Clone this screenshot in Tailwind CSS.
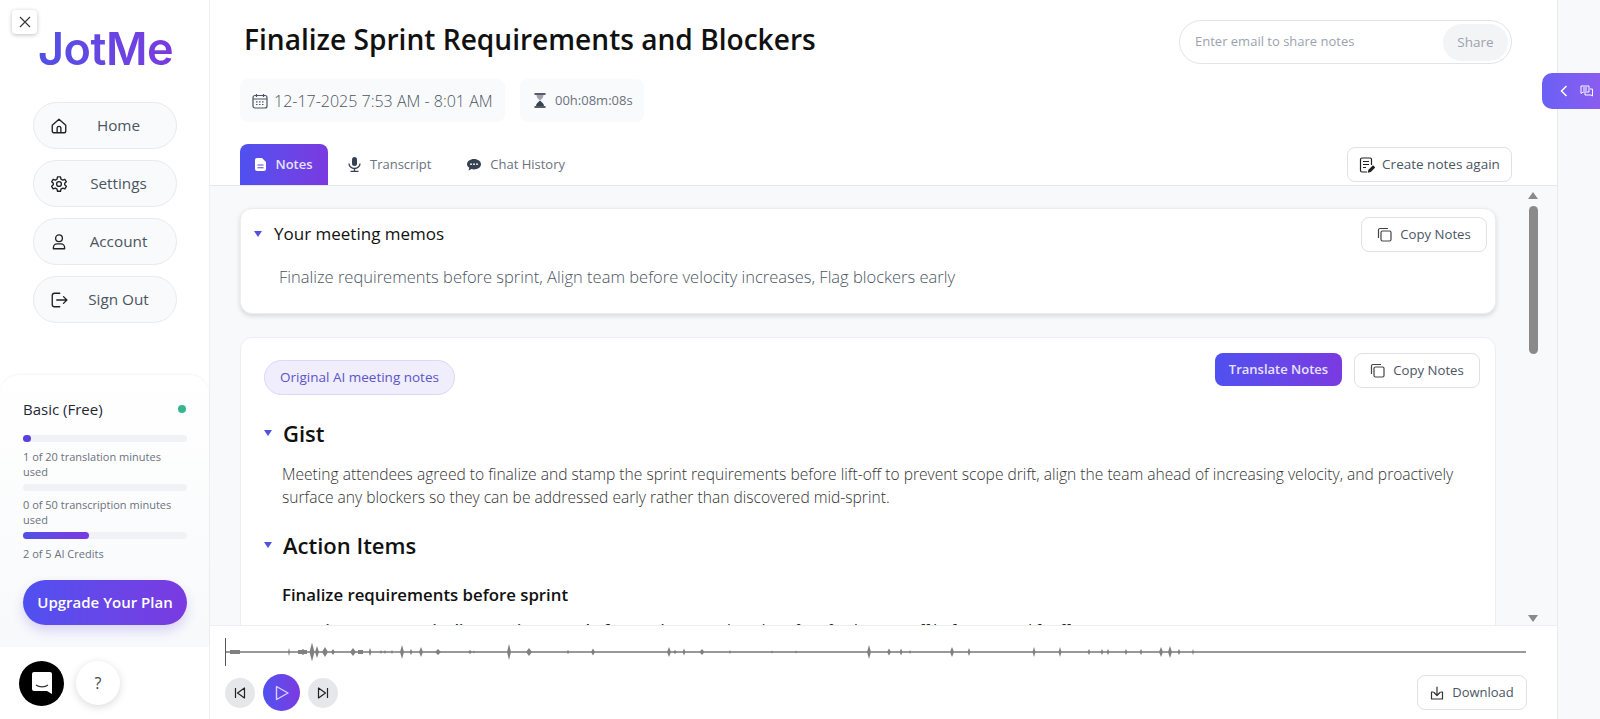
<!DOCTYPE html>
<html><head><meta charset="utf-8"><script src="https://cdn.jsdelivr.net/npm/@tailwindcss/browser@4"></script></head>
<body class="font-['Open_Sans',sans-serif]">
<div class="flex h-[719px] w-[1600px] overflow-hidden bg-white text-[#1f2937]">
<aside class="relative flex w-[210px] shrink-0 flex-col border-r border-[#eef0f3] bg-white">
 <button class="absolute left-3 top-[10px] flex h-[24px] w-[25px] items-center justify-center rounded bg-white shadow-[0_1px_4px_rgba(0,0,0,.25)]"><svg width="14" height="14" viewBox="0 0 14 14" fill="none" stroke="#333" stroke-width="1.1"><path d="M2 2l10 10M2 12L12 2"/></svg></button>
 <div class="mt-[24px] ml-[38px] w-[136px] bg-gradient-to-r from-[#4f50e6] to-[#7a3ae0] bg-clip-text font-['Inter',sans-serif] text-[45px] font-semibold leading-[50px] tracking-[-0.5px] text-transparent">JotMe</div>
 <nav class="ml-[33px] mt-[28px] flex w-[144px] flex-col gap-[11px]">
  <a class="flex h-[47px] items-center rounded-full border border-[#e8eaee] bg-[#f9fafb] pl-[16px] text-[15.300px] text-[#4b5563]"><svg class="shrink-0" width="18" height="18" viewBox="0 0 24 24" fill="none" stroke="#222" stroke-width="1.8" stroke-linejoin="round"><path d="M3 11l9-8 9 8v8a2 2 0 0 1-2 2H5a2 2 0 0 1-2-2z"/><path d="M9.5 21v-6a2.5 2.5 0 0 1 5 0v6"/></svg><span class="flex-1 pr-[7px] text-center">Home</span></a>
  <a class="flex h-[47px] items-center rounded-full border border-[#e8eaee] bg-[#f9fafb] pl-[16px] text-[15.300px] text-[#4b5563]"><svg class="shrink-0" width="18" height="18" viewBox="0 0 24 24" fill="none" stroke="#222" stroke-width="1.8" stroke-linejoin="round"><path d="M10 2.5h4l.6 3 2.4 1.2 2.8-1 2 3.4-2.2 2v2l2.2 2-2 3.4-2.8-1-2.4 1.2-.6 3h-4l-.6-3-2.4-1.2-2.8 1-2-3.4 2.2-2v-2l-2.2-2 2-3.4 2.8 1 2.4-1.2z"/><circle cx="12" cy="12" r="3.2"/></svg><span class="flex-1 pr-[7px] text-center">Settings</span></a>
  <a class="flex h-[47px] items-center rounded-full border border-[#e8eaee] bg-[#f9fafb] pl-[16px] text-[15.300px] text-[#4b5563]"><svg class="shrink-0" width="18" height="18" viewBox="0 0 24 24" fill="none" stroke="#222" stroke-width="1.8"><circle cx="12" cy="7" r="4.5"/><path d="M4.5 21v-1.5a5 5 0 0 1 5-5h5a5 5 0 0 1 5 5V21z" stroke-linejoin="round"/></svg><span class="flex-1 pr-[7px] text-center">Account</span></a>
  <a class="flex h-[47px] items-center rounded-full border border-[#e8eaee] bg-[#f9fafb] pl-[16px] text-[15.300px] text-[#4b5563]"><svg class="shrink-0" width="18" height="18" viewBox="0 0 24 24" fill="none" stroke="#222" stroke-width="1.8" stroke-linecap="round" stroke-linejoin="round"><path d="M13 3H6a3 3 0 0 0-3 3v12a3 3 0 0 0 3 3h7"/><path d="M9 12h13M18 7.5l4.5 4.5-4.5 4.5"/></svg><span class="flex-1 pr-[7px] text-center">Sign Out</span></a>
 </nav>
 <div class="mt-[52px] h-[272px] rounded-t-[20px] bg-gradient-to-b from-white to-[#f8f9fb] px-[23px] pt-[24px] shadow-[0_-1px_2px_rgba(0,0,0,.05)]">
  <div class="flex items-center justify-between text-[15px] leading-[20px] text-[#1f2937]"><span>Basic (Free)</span><span class="h-[8px] w-[8px] rounded-full bg-[#34b78f]"></span></div>
  <div class="mt-[16px] h-[7px] w-[164px] rounded-full bg-[#f1f2f5]"><div class="h-[7px] w-[8px] rounded-full bg-[#5b41dc]"></div></div>
  <p class="mt-[7px] text-[11px] leading-[15px] text-[#6b7280]">1 of 20 translation minutes used</p>
  <div class="mt-[5px] h-[7px] w-[164px] rounded-full bg-[#f1f2f5]"></div>
  <p class="mt-[6px] text-[11px] leading-[15px] text-[#6b7280]">0 of 50 transcription minutes used</p>
  <div class="mt-[5px] h-[7px] w-[164px] rounded-full bg-[#f1f2f5]"><div class="h-[7px] w-[66px] rounded-full bg-gradient-to-r from-[#4f50e6] to-[#7a3ae0]"></div></div>
  <p class="mt-[7px] text-[11px] leading-[15px] text-[#6b7280]">2 of 5 AI Credits</p>
  <button class="mt-[19px] flex h-[45px] w-[164px] items-center justify-center rounded-full bg-gradient-to-r from-[#4f50f0] to-[#7a3ae0] text-[15px] font-semibold text-white shadow-[0_6px_12px_rgba(90,60,220,.2)]">Upgrade Your Plan</button>
 </div>
 <div class="flex flex-1 items-center gap-[12px] pl-[19px]">
  <div class="flex h-[45px] w-[45px] items-center justify-center rounded-full bg-black"><svg width="22" height="24" viewBox="0 0 22 24"><path d="M3 1h16a2 2 0 0 1 2 2v20l-5-3H3a2 2 0 0 1-2-2V3a2 2 0 0 1 2-2z" fill="#fff"/><path d="M5 14c3 2.400 9 2.400 12 0" fill="none" stroke="#333" stroke-width="1.2"/></svg></div>
  <div class="flex h-[44px] w-[44px] items-center justify-center rounded-full bg-white text-[16px] text-[#444] shadow-[0_2px_8px_rgba(0,0,0,.15)]">?</div>
 </div>
</aside>
<main class="relative flex w-[1347px] shrink-0 flex-col">
 <header class="h-[185px] shrink-0 px-[30px]">
  <div class="flex items-start justify-between">
   <h1 class="ml-[4px] mt-[20px] text-[28.100px] font-semibold leading-[38px] text-[#111]">Finalize Sprint Requirements and Blockers</h1>
   <div class="mt-[20px] mr-[15px] flex h-[44px] w-[333px] items-center justify-between rounded-full border border-[#e2e4e8] pl-[15px] pr-[3px]"><span class="text-[13px] text-[#9ca3af]">Enter email to share notes</span><span class="flex h-[37px] w-[65px] items-center justify-center rounded-full bg-[#f3f4f6] text-[13.500px] text-[#9ca3af]">Share</span></div>
  </div>
  <div class="mt-[15px] flex gap-[15px]">
   <div class="flex h-[43px] w-[265px] items-center gap-[6px] rounded-lg bg-[#f9fafb] pl-[12px] text-[16px] font-light whitespace-nowrap text-[#4b5563]"><svg width="16" height="16" viewBox="0 0 16 16" fill="none" stroke="#4b5563" stroke-width="1.2"><rect x="1" y="2.500" width="14" height="12.500" rx="2"/><path d="M1 6h14M4.500 1v3M11.500 1v3"/><path d="M4 8.800h8M4 11.500h8" stroke-dasharray="1.500 1.500"/></svg><span>12-17-2025 7:53 AM - 8:01 AM</span></div>
   <div class="flex h-[43px] w-[124px] items-center gap-[9px] rounded-lg bg-[#f9fafb] pl-[14px] text-[13px] text-[#6b7280]"><svg width="12" height="15" viewBox="0 0 12 15"><path d="M2.500 2c0 2.500 1.800 4 3.500 5.500C7.700 6 9.500 4.500 9.500 2z" fill="#9ca3af"/><path d="M2 13c0-2.500 2.300-4 4-5.500 1.700 1.500 4 3 4 5.500z" fill="#374151"/><path d="M.5 1h11M.5 14h11" stroke="#1f2937" stroke-width="1.600"/></svg><span>00h:08m:08s</span></div>
  </div>
  <div class="mt-[22px] flex items-end justify-between">
   <div class="flex items-center text-[13px] text-[#6b7280]">
    <div class="flex h-[41px] w-[88px] items-center justify-center gap-[9px] rounded-t-lg bg-gradient-to-r from-[#4f50f0] to-[#7a3ae0] font-semibold text-[#e7e3ff]"><svg width="11" height="13" viewBox="0 0 11 13"><path d="M2 0h5l4 4v7a2 2 0 0 1-2 2H2a2 2 0 0 1-2-2V2a2 2 0 0 1 2-2z" fill="#fff"/><path d="M2.500 7h6M2.500 9.800h6" stroke="#5b45e6" stroke-width="1.100"/></svg>Notes</div>
    <div class="ml-[20px] flex items-center gap-[9px]"><svg width="13" height="15" viewBox="0 0 13 15" fill="none" stroke="#374151" stroke-width="1.300"><rect x="4" y="0" width="5" height="9" rx="2.500" fill="#374151" stroke="none"/><path d="M1 6.500a5.500 5 0 0 0 11 0M6.500 11.500V14M2.500 14.300h8"/></svg>Transcript</div>
    <div class="ml-[36px] flex items-center gap-[9px]"><svg width="14" height="12" viewBox="0 0 14 12"><path d="M7 0c3.900 0 7 2.300 7 5.200s-3.100 5.200-7 5.200c-.9 0-1.700-.1-2.500-.4L1.500 11.500l.8-2.800C.9 7.800 0 6.600 0 5.200 0 2.300 3.100 0 7 0z" fill="#374151"/><circle cx="4" cy="5.200" r=".9" fill="#fff"/><circle cx="7" cy="5.200" r=".9" fill="#fff"/><circle cx="10" cy="5.200" r=".9" fill="#fff"/></svg>Chat History</div>
   </div>
   <button class="mb-[3px] mr-[15px] flex h-[35px] w-[165px] items-center justify-center gap-[7px] rounded-lg border border-[#dfe1e6] text-[13.500px] text-[#4b5563]"><svg width="16" height="16" viewBox="0 0 16 16" fill="none" stroke="#222" stroke-width="1.200"><path d="M8 15H3a1.500 1.500 0 0 1-1.500-1.500v-11A1.500 1.500 0 0 1 3 1h8a1.500 1.500 0 0 1 1.500 1.500V8M4 4.500h6M4 7.500h6M4 10.500h3"/><path d="M9.500 15l.5-2 4-4 1.500 1.500-4 4z" fill="#222"/></svg>Create notes again</button>
  </div>
 </header>
 <section class="relative h-[440px] shrink-0 overflow-hidden border-t border-[#e5e7eb] bg-[#f8f9fb] pl-[30px] pr-[60px] pt-[22px]">
  <div class="h-[106px] w-[1256px] rounded-[12px] border border-[#eceef1] bg-white pl-[13px] pr-[8px] pt-[8px] shadow-[0_2px_5px_rgba(0,0,0,.14)]">
   <div class="flex items-start justify-between">
    <div class="flex items-center gap-[12px] pt-[5px] text-[17px] font-medium leading-[24px] text-[#111]"><span class="h-0 w-0 border-x-[4.500px] border-t-[6px] border-x-transparent border-t-[#5451dc]"></span>Your meeting memos</div>
    <button class="flex h-[35px] w-[126px] items-center justify-center gap-[8px] rounded-lg border border-[#dfe1e6] text-[13.200px] text-[#4b5563]"><svg width="15" height="15" viewBox="0 0 15 15" fill="none" stroke="#444" stroke-width="1.200"><rect x="4" y="4" width="10" height="10" rx="1.500"/><path d="M11 1.500H3A1.500 1.500 0 0 0 1.500 3v8"/></svg>Copy Notes</button>
   </div>
   <p class="ml-[25px] mt-[13px] text-[16.500px] font-light leading-[24px] text-[#4b5563]">Finalize requirements before sprint, Align team before velocity increases, Flag blockers early</p>
  </div>
  <div class="mt-[23px] h-[400px] w-[1256px] rounded-[12px] border border-[#eceef1] bg-white pl-[23px] pr-[15px] pt-[15px]">
   <div class="flex items-start justify-between">
    <span class="mt-[7px] flex h-[35px] w-[191px] items-center justify-center rounded-full border border-[#dcd8f5] bg-[#f0edfc] text-[13.500px] text-[#5a55c8]">Original AI meeting notes</span>
    <div class="flex gap-[12px]">
     <button class="h-[33px] w-[127px] rounded-lg bg-gradient-to-r from-[#4f50f0] to-[#7a3ae0] text-[13px] font-semibold text-[#e7e3ff]">Translate Notes</button>
     <button class="flex h-[35px] w-[126px] items-center justify-center gap-[8px] rounded-lg border border-[#dfe1e6] text-[13.200px] text-[#4b5563]"><svg width="15" height="15" viewBox="0 0 15 15" fill="none" stroke="#444" stroke-width="1.200"><rect x="4" y="4" width="10" height="10" rx="1.500"/><path d="M11 1.500H3A1.500 1.500 0 0 0 1.500 3v8"/></svg>Copy Notes</button>
    </div>
   </div>
   <h2 class="mt-[22px] flex items-center gap-[11px] text-[22px] font-semibold leading-[32px] text-[#111]"><span class="h-0 w-0 border-x-[4.500px] border-t-[6px] border-x-transparent border-t-[#5451dc]"></span>Gist</h2>
   <p class="ml-[18px] mt-[14px] w-[1185px] text-[15.600px] font-light leading-[22.500px] text-[#333]">Meeting attendees agreed to finalize and stamp the sprint requirements before lift-off to prevent scope drift, align the team ahead of increasing velocity, and proactively<br>surface any blockers so they can be addressed early rather than discovered mid-sprint.</p>
   <h2 class="mt-[21px] flex items-center gap-[11px] text-[22px] font-semibold leading-[32px] text-[#111]"><span class="h-0 w-0 border-x-[4.500px] border-t-[6px] border-x-transparent border-t-[#5451dc]"></span>Action Items</h2>
   <h3 class="ml-[18px] mt-[22px] text-[16.800px] font-semibold leading-[24px] text-[#111]">Finalize requirements before sprint</h3>
   <p class="ml-[37px] mt-[11px] text-[15px] leading-[22px] text-[#222]"><b class="font-semibold">Assign owner to: Finalize requirements before sprint</b> — Lock and confirm final stamp-off before sprint lift-off</p>
  </div>
  <div class="absolute right-[19px] top-[6px] flex h-[430px] w-[10px] flex-col items-center justify-between">
   <span class="h-0 w-0 border-x-[5px] border-b-[7px] border-x-transparent border-b-[#8a8a8a]"></span>
   <span class="absolute top-[14px] h-[148px] w-[9px] rounded-full bg-[#8a8a8a]"></span>
   <span class="h-0 w-0 border-x-[5px] border-t-[7px] border-x-transparent border-t-[#8a8a8a]"></span>
  </div>
 </section>
 <footer class="h-[94px] shrink-0 border-t border-[#eceef1] bg-white pl-[15px] pr-[30px]">
  <svg class="mt-[12px] block" width="1302" height="28" viewBox="0 0 1302 28"><path d="M.5 0v28" stroke="#555" stroke-width="1"/><path d="M1 14H1301" stroke="#777" stroke-width="1.500"/>
   <g fill="#808080"><path d="M5 12h10v4H5zM73 12h9v4h-9zM133 12h5v4h-5z"/>
   <path d="M64 10l1 4-1 4-1-4zM78 11l4 3-4 3-4-3zM87 4.500l2.500 9.500-2.500 9.500-2.500-9.500zM92 8l2 6-2 6-2-6zM100 9l3 5-3 5-3-5zM108 11l2 3-2 3-2-3zM128 10l3 4-3 4-3-4zM145 10l1.500 4-1.500 4-1.500-4zM156 12l1 2-1 2-1-2zM160 12l1 2-1 2-1-2zM167 12l1 2-1 2-1-2zM177 7l2 7-2 7-2-7zM186 11l1.500 3-1.500 3-1.500-3zM196 9l2 5-2 5-2-5zM213 11l3 3-3 3-3-3zM245 12l2 2-2 2-2-2zM249 12.500l1 1.500-1 1.500-1-1.500zM284 6l2 8-2 8-2-8zM304 10l3 4-3 4-3-4zM343 12l1.500 2-1.500 2-1.500-2zM368 10.500l2 3.500-2 3.500-2-3.500z"/>
   <path d="M444 9l2 5-2 5-2-5zM450 12l2 2-2 2-2-2zM459 10.500l1.500 3.500-1.500 3.500-1.500-3.500zM477 11l2.500 3-2.500 3-2.500-3zM505 12l1 2-1 2-1-2zM547 12.500l1 1.500-1 1.500-1-1.500zM571 12.500l1 1.500-1 1.500-1-1.500zM644 7l2 7-2 7-2-7zM664 10.500l2 3.500-2 3.500-2-3.500zM676 10.500l1.500 3.500-1.500 3.500-1.500-3.500zM685 12l1 2-1 2-1-2zM727 9l2 5-2 5-2-5zM744 10l1.500 4-1.500 4-1.500-4zM809 9l1.500 5-1.500 5-1.500-5zM835 9l1.500 5-1.500 5-1.500-5zM864 11l1.500 3-1.500 3-1.500-3zM877 11l1.500 3-1.500 3-1.500-3zM883 11l1.500 3-1.500 3-1.500-3zM901 11l1.500 3-1.500 3-1.500-3zM916 11l1.500 3-1.500 3-1.500-3zM936 9l2 5-2 5-2-5zM945 8l2 6-2 6-2-6zM954 11l1.500 3-1.500 3-1.500-3zM968 11l1 3-1 3-1-3z"/></g></svg>
  <div class="mt-[8px] flex items-center justify-between">
   <div class="flex items-center gap-[8px]">
    <button class="flex h-[30px] w-[30px] items-center justify-center rounded-full bg-[#e5e7eb]"><svg width="12" height="12" viewBox="0 0 12 12" fill="none" stroke="#222" stroke-width="1.200" stroke-linejoin="round"><path d="M1.500 1v10M10.500 1v10L3.500 6z"/></svg></button>
    <button class="flex h-[37px] w-[37px] items-center justify-center rounded-full bg-gradient-to-r from-[#4f50f0] to-[#7a3ae0]"><svg width="14" height="16" viewBox="0 0 14 16" fill="none" stroke="#d8d0ff" stroke-width="1.400" stroke-linejoin="round"><path d="M1.500 1.500v13L13 8z"/></svg></button>
    <button class="flex h-[30px] w-[30px] items-center justify-center rounded-full bg-[#e5e7eb]"><svg width="12" height="12" viewBox="0 0 12 12" fill="none" stroke="#222" stroke-width="1.200" stroke-linejoin="round"><path d="M10.500 1v10M1.500 1v10L8.500 6z"/></svg></button>
   </div>
   <button class="flex h-[35px] w-[110px] items-center justify-center gap-[8px] rounded-lg border border-[#dfe1e6] text-[13px] text-[#4b5563]"><svg width="14" height="14" viewBox="0 0 14 14" fill="none" stroke="#333" stroke-width="1.200" stroke-linecap="round" stroke-linejoin="round"><path d="M7 1v8M4 6.500L7 9.500l3-3M3 6H1.500v7h11V6H11"/></svg>Download</button>
  </div>
 </footer>
 <div class="absolute right-[-43px] top-[73px] flex h-[36px] w-[58px] items-center gap-[12px] rounded-l-[10px] bg-gradient-to-r from-[#6b60f5] to-[#8a5cf0] pl-[18px]"><svg width="8" height="12" viewBox="0 0 8 12" fill="none" stroke="#fff" stroke-width="1.500"><path d="M6.500 1L1.500 6l5 5"/></svg><svg width="13" height="12" viewBox="0 0 13 12" fill="none" stroke="#fff" stroke-width="1"><path d="M1 1h8v6H3L1 8.500zM10 4h2.500v7L11 10H5V7.500M3 3h4M3 5h4"/></svg></div>
</main>
<div class="flex-1 border-l border-[#e8eaee] bg-[#f8f9fb]"></div>
</div>
</body></html>
